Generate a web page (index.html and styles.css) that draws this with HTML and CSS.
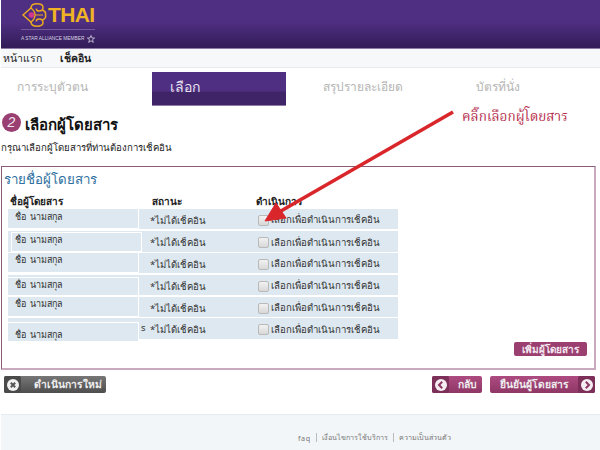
FILE: index.html
```html
<!DOCTYPE html>
<html lang="th">
<head>
<meta charset="utf-8">
<title>เลือกผู้โดยสาร</title>
<link rel="stylesheet" href="styles.css">
</head>
<body>
<div class="page">
  <header class="brand">
    <div class="logo">
      <div class="logo-top">
        <svg class="orchid" width="27" height="24" viewBox="0 0 27 24" fill="none">
          <path d="M2 12 L10 5 Q14 8 14 12 Q14 16 10 19 Z" stroke="#eaa91f" stroke-width="1.4"/>
          <path d="M10 5 Q10 .8 16 .8 Q22 .8 22 4.500 Q22 8 18 8 Q15 8 15.500 5.500" stroke="#eaa91f" stroke-width="1.5"/>
          <path d="M10 19 Q10 23.200 16 23.200 Q22 23.200 22 19.500 Q22 16 18 16 Q15 16 15.500 18.500" stroke="#eaa91f" stroke-width="1.500"/>
          <path d="M21.500 7 Q25.500 9 24.500 12 Q25.500 15 21.500 17" stroke="#eaa91f" stroke-width="1.500"/>
          <path d="M14 12 H22" stroke="#eaa91f" stroke-width="1"/>
          <circle cx="10.500" cy="12" r="2.800" fill="#d0378f"/>
        </svg>
        <span class="logo-word">THAI</span>
      </div>
      <div class="logo-rule"></div>
      <div class="logo-sub"><span>A STAR ALLIANCE MEMBER</span>
        <svg width="8" height="8" viewBox="0 0 8 8" fill="none"><path d="M4 .5 5 3 7.6 3 5.5 4.7 6.3 7.4 4 5.8 1.700 7.400 2.500 4.700 .4 3 3 3Z" stroke="#d8d2e4" stroke-width=".8"/></svg>
      </div>
    </div>
  </header>
  <nav class="crumbs"><a class="crumb">หน้าแรก</a><a class="crumb crumb-current">เช็คอิน</a></nav>
  <div class="steps">
    <div class="step step-1">การระบุตัวตน</div>
    <div class="step step-2 step-active">เลือก</div>
    <div class="step step-3">สรุปรายละเอียด</div>
    <div class="step step-4">บัตรที่นั่ง</div>
  </div>
  <h1 class="title"><span class="num">2</span><span class="title-text">เลือกผู้โดยสาร</span></h1>
  <p class="intro">กรุณาเลือกผู้โดยสารที่ท่านต้องการเช็คอิน</p>
  <section class="panel">
    <h2 class="panel-title">รายชื่อผู้โดยสาร</h2>
    <div class="cols"><span class="col-name">ชื่อผู้โดยสาร</span><span class="col-status">สถานะ</span><span>ดำเนินการ</span></div>
    <div class="row row-1"><div class="name">ชื่อ นามสกุล</div><div class="status">*ไม่ได้เช็คอิน</div><label class="act"><span class="box"></span>เลือกเพื่อดำเนินการเช็คอิน</label></div>
    <div class="row row-2"><div class="name">ชื่อ นามสกุล</div><div class="status">*ไม่ได้เช็คอิน</div><label class="act"><span class="box"></span>เลือกเพื่อดำเนินการเช็คอิน</label></div>
    <div class="row row-3"><div class="name">ชื่อ นามสกุล</div><div class="status">*ไม่ได้เช็คอิน</div><label class="act"><span class="box"></span>เลือกเพื่อดำเนินการเช็คอิน</label></div>
    <div class="row row-4"><div class="name">ชื่อ นามสกุล</div><div class="status">*ไม่ได้เช็คอิน</div><label class="act"><span class="box"></span>เลือกเพื่อดำเนินการเช็คอิน</label></div>
    <div class="row row-5"><div class="name">ชื่อ นามสกุล</div><div class="status">*ไม่ได้เช็คอิน</div><label class="act"><span class="box"></span>เลือกเพื่อดำเนินการเช็คอิน</label></div>
    <div class="row row-6"><div class="name">ชื่อ นามสกุล</div><span class="stray">s</span><div class="status">*ไม่ได้เช็คอิน</div><label class="act"><span class="box"></span>เลือกเพื่อดำเนินการเช็คอิน</label></div>
    <div class="add-wrap"><a class="add">เพิ่มผู้โดยสาร</a></div>
  </section>
  <div class="actions">
    <a class="btn btn-grey"><span class="cap cap-grey"><svg width="12" height="12" viewBox="0 0 12 12"><circle cx="6" cy="6" r="6" fill="#f1f1f1"/><path d="M3.800 3.800 8.200 8.200M8.200 3.800 3.800 8.200" stroke="#555" stroke-width="2"/></svg></span><span class="btn-text">ดำเนินการใหม่</span></a>
    <div class="actions-right">
      <a class="btn btn-pink btn-back"><span class="cap cap-pink"><svg width="12" height="12" viewBox="0 0 12 12"><circle cx="6" cy="6" r="6" fill="#f4eef2"/><path d="M7.200 2.800 4 6l3.200 3.200" fill="none" stroke="#8d3563" stroke-width="2"/></svg></span><span class="btn-text">กลับ</span></a>
      <a class="btn btn-pink btn-next"><span class="btn-text">ยืนยันผู้โดยสาร</span><span class="cap cap-pink"><svg width="12" height="12" viewBox="0 0 12 12"><circle cx="6" cy="6" r="6" fill="#f4eef2"/><path d="M4.800 2.800 8 6 4.800 9.200" fill="none" stroke="#8d3563" stroke-width="2"/></svg></span></a>
    </div>
  </div>
  <footer class="foot"><a class="foot-faq">faq</a><i></i><a>เงื่อนไขการใช้บริการ</a><i></i><a>ความเป็นส่วนตัว</a></footer>
  <div class="callout">คลิ๊กเลือกผู้โดยสาร</div>
  <svg class="arrow" width="600" height="450" viewBox="0 0 600 450" fill="none">
    <path d="M453 112 274 215" stroke="#d9262b" stroke-width="3.600"/>
    <path d="M265 221 276 203 286 218Z" fill="#d9262b" stroke="#d9262b"/>
  </svg>
</div>
</body>
</html>
```
FILE: styles.css
```css
* { box-sizing: border-box; }
html, body { margin: 0; padding: 0; background: #fff; }
body { font-family: "Noto Sans", "DejaVu Sans", "Liberation Sans", sans-serif; color: #222; overflow: hidden; }
.page { width: 600px; height: 450px; position: relative; overflow: hidden; }

.brand { height: 49px; margin-left: 1px; background: linear-gradient(#4f2f82 0, #4f2f82 22px, #331c58 47px); border-bottom: 1px solid #8d7aa5; padding: 3px 0 0 20px; }
.logo { width: 74px; }
.logo-top { display: flex; align-items: center; height: 24px; }
.logo-word { font: bold 21px/24px "Liberation Sans", sans-serif; color: #f0b323; letter-spacing: -.6px; }
.logo-rule { height: 1px; background: #73589a; margin-top: 2px; }
.logo-sub { display: flex; align-items: center; justify-content: space-between; font: 4.800px/9px "Liberation Sans", sans-serif; color: #d8d2e4; margin-top: 4px; white-space: nowrap; }

.crumbs { height: 19px; margin-left: 1px; background: #f6f8fa; border-bottom: 1px solid #e6ebef; display: flex; gap: 18px; padding-left: 2px; font-size: 10.500px; line-height: 18px; color: #222; }
.crumb-current { font-weight: 700; }

.steps { display: flex; margin-top: 4px; height: 34px; font-size: 12px; line-height: 30px; color: #b5b5b5; }
.step { white-space: nowrap; }
.step-1 { width: 152px; padding-left: 17px; }
.step-2 { width: 134px; padding-left: 18px; }
.step-3 { width: 190px; padding-left: 37px; }
.step-active { color: #e9e3f0; font-size: 14px; background: linear-gradient(#4f2f82 0, #4f2f82 19px, #3f2468 20px, #3f2468 33px); border-bottom: 1px solid #8d7aa5; }

.title { margin: 6px 0 0 2px; height: 20px; display: flex; align-items: center; gap: 4px; font-size: 15px; font-weight: 700; color: #111; }
.title-text { padding-top: 6px; }
.num { flex: none; width: 19px; height: 19px; border-radius: 50%; background: #9a3f72; color: #f3e6ee; font: italic 14px/19px "Liberation Sans", sans-serif; text-align: center; }
.intro { margin: 7px 0 0 1px; height: 18px; font-size: 9.600px; line-height: 18px; color: #222; }

.panel { margin: 9px 0 0 1px; width: 595px; height: 204px; border: 1px solid #8a5a78; border-bottom: 2px solid #c9a9bd; border-right: 2px solid #c9a9bd; padding: 3px 0 0 0; }
.panel-title { margin: 0 0 0 2px; height: 19px; font-size: 13.300px; line-height: 19px; font-weight: 400; color: #2f6f9f; }
.cols { display: flex; margin: 5px 0 0 8px; height: 15px; font-size: 10px; line-height: 15px; font-weight: 700; color: #222; }
.col-name { width: 142px; }
.col-status { width: 104px; }

.row { display: flex; width: 390px; height: 20px; margin: 2px 0 0 6px; background: #dee8f1; font-size: 9.600px; line-height: 20px; color: #333; }
.name { flex: none; width: 131px; height: 20px; padding-left: 7px; margin-right: 11px; background: #dee8f1; border-right: 1px solid #fff; border-bottom: 1px solid #fff; line-height: 15px; font-size: 9px; word-spacing: 2px; }
.status { flex: none; width: 104px; padding-top: 2px; }
.act { display: flex; align-items: center; white-space: nowrap; padding-left: 4px; padding-top: 2px; }
.box { flex: none; width: 11px; height: 11px; margin-right: 2px; border: 1px solid #b9b9b9; border-radius: 2px; background: linear-gradient(#f2f2f2, #d8d8d8); }
.row-1 { margin-top: 0; height: 20px; }
.row-2 { height: 21px; }
.row-2 .name { margin-left: 3px; margin-right: 8px; height: 20px; padding-left: 3px; border: 1px solid #fff; margin-top: 1px; line-height: 14px; }
.row-3 { margin-top: 1px; }
.row-3 .name { line-height: 13px; }
.row-4 { margin-top: 2px; }
.row-4 .name { margin-top: 2px; height: 19px; border-top: 1px solid #fff; line-height: 14px; }
.row-5 { margin-top: 2px; }
.row-5 .name { line-height: 14px; }
.row-6 { margin-top: 1px; height: 21px; }
.row-6 .name { margin-top: 4px; height: 19px; border-top: 1px solid #fff; border-bottom: 0; line-height: 23px; }
.row-6 .stray { width: 0; margin-left: -9px; margin-right: 9px; }

.add-wrap { display: flex; justify-content: flex-end; padding-right: 7px; margin-top: 3px; }
.add { display: block; width: 73px; height: 14px; border-radius: 2px; background: #9b3f70; color: #f3e8ef; font-size: 10px; line-height: 14px; text-align: center; font-weight: 700; }

.actions { display: flex; justify-content: space-between; align-items: flex-start; width: 591px; margin: 6px 0 0 4px; height: 38px; }
.actions-right { display: flex; gap: 8px; }
.btn { display: flex; align-items: center; height: 17px; border-radius: 2px; font-size: 10.300px; font-weight: 700; color: #eee; white-space: nowrap; }
.btn-grey { width: 102px; background: linear-gradient(#777, #4d4d4d); }
.btn-pink { background: linear-gradient(#ad4b80, #8f3766); }
.btn-back { width: 50px; }
.btn-next { width: 105px; }
.cap { display: flex; align-items: center; justify-content: center; flex: none; width: 17px; height: 17px; border-radius: 2px; }
.cap-grey { background: #4a4a4a; }
.cap-pink { background: #7c2f58; }
.btn-text { flex: 1; text-align: center; }
.btn-grey .btn-text { padding-left: 8px; }
.btn-back .btn-text { padding-left: 4px; }

.foot { height: 36px; margin-left: 1px; background: #f3f6f9; border-top: 1px solid #e6ebef; display: flex; align-items: center; padding: 10px 0 0 297px; font-size: 7.200px; color: #777; }
.foot-faq { letter-spacing: .6px; }
.foot i { display: block; width: 1px; height: 9px; background: #bbb; margin: 0 5px; }

.callout { position: absolute; left: 462px; top: 106px; font: 13.500px/24px "Noto Serif Thai", "Noto Sans", serif; color: #b5304f; white-space: nowrap; }
.arrow { position: absolute; left: 0; top: 0; pointer-events: none; }
```
